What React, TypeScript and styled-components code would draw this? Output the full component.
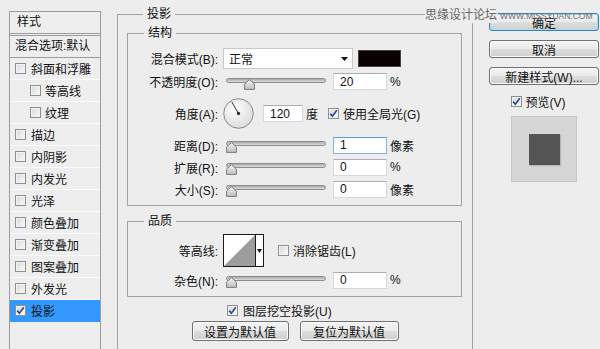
import React from 'react';
import styled, {createGlobalStyle} from 'styled-components';

const GlobalStyle = createGlobalStyle`
  html, body {
    margin: 0;
    padding: 0;
    background: #ededed;
  }
  body {
    font-family: "Liberation Sans", "Noto Sans CJK SC", sans-serif;
    font-size: 12px;
    color: #111;
  }
`;

type StyleItem = {
    name: string
    indent?: boolean
    checked?: boolean
    active?: boolean
}

const styleItems: StyleItem[] = [
    {name: '斜面和浮雕'},
    {name: '等高线', indent: true},
    {name: '纹理', indent: true},
    {name: '描边'},
    {name: '内阴影'},
    {name: '内发光'},
    {name: '光泽'},
    {name: '颜色叠加'},
    {name: '渐变叠加'},
    {name: '图案叠加'},
    {name: '外发光'},
    {name: '投影', checked: true, active: true},
];

const CheckBox = ({checked}: { checked?: boolean }) => (
    <Box>
        {checked ? (
            <svg width="9" height="9" viewBox="0 0 9 9">
                <path d="M1.2 4.6 L3.4 7.2 L7.8 1.2" fill="none" stroke="#2c4c92" strokeWidth="1.7"/>
            </svg>
        ) : null}
    </Box>
);

const Slider = ({value}: { value: number }) => (
    <SliderBox>
        <SliderRail/>
        <SliderThumb style={{left: `${Math.round(value * 89)}px`}} width="11" height="11" viewBox="0 0 11 11">
            <defs>
                <linearGradient id="thumbFill" x1="0" y1="0" x2="0" y2="1">
                    <stop offset="0" stopColor="#f6f6f6"/>
                    <stop offset="1" stopColor="#bdbdbd"/>
                </linearGradient>
            </defs>
            <path d="M5.5 0.6 L10.4 5 L10.4 10.4 L0.6 10.4 L0.6 5 Z" fill="url(#thumbFill)" stroke="#7a7a7a"/>
        </SliderThumb>
    </SliderBox>
);

const AngleDial = () => (
    <Dial width="31" height="31" viewBox="0 0 31 31">
        <defs>
            <radialGradient id="dialFill" cx="0.4" cy="0.35" r="0.7">
                <stop offset="0" stopColor="#ffffff"/>
                <stop offset="1" stopColor="#d9d9d9"/>
            </radialGradient>
        </defs>
        <circle cx="15.5" cy="15.5" r="14.8" fill="url(#dialFill)" stroke="#8a8a8a"/>
        <line x1="15.5" y1="15.5" x2="8.8" y2="3.9" stroke="#333" strokeWidth="1"/>
        <circle cx="15.5" cy="15.5" r="1.7" fill="#333"/>
    </Dial>
);

const DropArrow = ({w = 7}: { w?: number }) => (
    <svg width={w} height="4" viewBox={`0 0 ${w} 4`}>
        <path d={`M0 0 L${w} 0 L${w / 2} 4 Z`} fill="#111"/>
    </svg>
);

const App = () => {
    return (
        <Dialog>
            <GlobalStyle/>
            <StylesPanel>
                <PanelHeader>样式</PanelHeader>
                <BlendRow>混合选项:默认</BlendRow>
                {styleItems.map(item => (
                    <StyleRow key={item.name} $indent={item.indent} $active={item.active}>
                        <CheckBox checked={item.checked}/>
                        <span>{item.name}</span>
                    </StyleRow>
                ))}
            </StylesPanel>

            <MainGroup>
                <GroupTitle>投影</GroupTitle>
                <SubGroup $padTop={7} $padBottom={5}>
                    <GroupTitle>结构</GroupTitle>
                    <FieldRow $h={23}>
                        <FieldLabel>混合模式(B):</FieldLabel>
                        <SelectBox>
                            <span>正常</span>
                            <DropArrow/>
                        </SelectBox>
                        <Swatch/>
                    </FieldRow>
                    <FieldRow $h={23}>
                        <FieldLabel>不透明度(O):</FieldLabel>
                        <Slider value={0.2}/>
                        <NumberInput readOnly value="20"/>
                        <Unit>%</Unit>
                    </FieldRow>
                    <FieldRow $h={41}>
                        <FieldLabel>角度(A):</FieldLabel>
                        <AngleDial/>
                        <NumberInput readOnly value="120" $w={40} $gap={9}/>
                        <Unit>度</Unit>
                        <CheckLabel $gap={10}>
                            <CheckBox checked/>
                            <span>使用全局光(G)</span>
                        </CheckLabel>
                    </FieldRow>
                    <FieldRow $h={22}>
                        <FieldLabel>距离(D):</FieldLabel>
                        <Slider value={0}/>
                        <NumberInput readOnly value="1" $focused/>
                        <Unit>像素</Unit>
                    </FieldRow>
                    <FieldRow $h={22}>
                        <FieldLabel>扩展(R):</FieldLabel>
                        <Slider value={0}/>
                        <NumberInput readOnly value="0"/>
                        <Unit>%</Unit>
                    </FieldRow>
                    <FieldRow $h={22}>
                        <FieldLabel>大小(S):</FieldLabel>
                        <Slider value={0}/>
                        <NumberInput readOnly value="0"/>
                        <Unit>像素</Unit>
                    </FieldRow>
                </SubGroup>

                <SubGroup $padTop={4} $padBottom={5} $gapTop={8}>
                    <GroupTitle>品质</GroupTitle>
                    <FieldRow $h={37}>
                        <FieldLabel>等高线:</FieldLabel>
                        <ContourPicker>
                            <ContourCurve width="31" height="31" viewBox="0 0 31 31" preserveAspectRatio="none">
                                <path d="M0 31 L31 0 L31 31 Z" fill="#9d9d9d"/>
                            </ContourCurve>
                            <ContourArrow>
                                <DropArrow w={5}/>
                            </ContourArrow>
                        </ContourPicker>
                        <CheckLabel $gap={14}>
                            <CheckBox/>
                            <span>消除锯齿(L)</span>
                        </CheckLabel>
                    </FieldRow>
                    <FieldRow $h={22}>
                        <FieldLabel>杂色(N):</FieldLabel>
                        <Slider value={0}/>
                        <NumberInput readOnly value="0"/>
                        <Unit>%</Unit>
                    </FieldRow>
                </SubGroup>

                <KnockoutRow>
                    <CheckBox checked/>
                    <span>图层挖空投影(U)</span>
                </KnockoutRow>
                <DefaultsRow>
                    <PushButton $w={97} $h={20}>设置为默认值</PushButton>
                    <PushButton $w={99} $h={20}>复位为默认值</PushButton>
                </DefaultsRow>
            </MainGroup>

            <SideColumn>
                <PushButton $w={110} $h={18} $primary>确定</PushButton>
                <PushButton $w={110} $h={18}>取消</PushButton>
                <PushButton $w={110} $h={18}>新建样式(W)...</PushButton>
                <PreviewToggle>
                    <CheckBox checked/>
                    <span>预览(V)</span>
                </PreviewToggle>
                <PreviewBox>
                    <PreviewSquare/>
                </PreviewBox>
            </SideColumn>

            <Watermark>
                <WatermarkName>思缘设计论坛</WatermarkName>
                <WatermarkUrl>WWW.MISSYUAN.COM</WatermarkUrl>
            </Watermark>
        </Dialog>
    );
};

const Dialog = styled.div`
  position: relative;
  width: 600px;
  height: 349px;
  overflow: hidden;
  display: flex;
  align-items: flex-start;
  background: #ededed;
`

const StylesPanel = styled.div`
  flex-shrink: 0;
  margin: 11px 0 0 9px;
  width: 90px;
  height: 345px;
  border: 1px solid #9b9b9b;
  background: #eeeeee;
`

const PanelHeader = styled.div`
  height: 21px;
  line-height: 21px;
  padding-left: 7px;
  border-bottom: 3px double #9b9b9b;
`

const BlendRow = styled.div`
  height: 21px;
  line-height: 21px;
  padding-left: 5px;
  white-space: nowrap;
  overflow: hidden;
  border-bottom: 1px solid #9b9b9b;
`

const StyleRow = styled.div<{ $indent?: boolean; $active?: boolean }>`
  display: flex;
  align-items: center;
  gap: ${p => p.$indent ? '4px' : '5px'};
  height: 21px;
  padding-left: ${p => p.$indent ? '20px' : '5px'};
  border-bottom: 1px solid ${p => p.$active ? '#3399ff' : '#fbfbfb'};
  background: ${p => p.$active ? '#3399ff' : 'transparent'};
  white-space: nowrap;
`

const Box = styled.span`
  display: inline-flex;
  align-items: center;
  justify-content: center;
  flex-shrink: 0;
  box-sizing: border-box;
  width: 11px;
  height: 11px;
  border: 1px solid #8e8f8f;
  background: linear-gradient(135deg, #d6d6d6, #fbfbfb);
  box-shadow: inset 0 0 0 1px #f3f3f3;
`

const MainGroup = styled.fieldset`
  flex-shrink: 0;
  box-sizing: border-box;
  min-width: 0;
  width: 356px;
  height: 360px;
  margin: 7px 0 0 16px;
  padding: 5px 0 0 9px;
  border: 1px solid #a3a3a3;
`

const GroupTitle = styled.legend`
  margin-left: 16px;
  padding: 0 4px;
  line-height: 14px;
  font-size: 12px;
`

const SubGroup = styled.fieldset<{ $padTop: number; $padBottom: number; $gapTop?: number }>`
  box-sizing: border-box;
  min-width: 0;
  width: 335px;
  margin: ${p => p.$gapTop ?? 0}px 0 0 0;
  padding: ${p => p.$padTop}px 0 ${p => p.$padBottom}px 0;
  border: 1px solid #a3a3a3;
`

const FieldRow = styled.div<{ $h: number }>`
  display: flex;
  align-items: center;
  height: ${p => p.$h}px;
  white-space: nowrap;
`

const FieldLabel = styled.span`
  flex-shrink: 0;
  width: 90px;
  text-align: right;
`

const SelectBox = styled.div`
  display: flex;
  align-items: center;
  justify-content: space-between;
  box-sizing: border-box;
  width: 130px;
  height: 21px;
  margin-left: 5px;
  padding: 0 4px 0 5px;
  background: #fff;
  border: 1px solid #c9c9c9;
`

const Swatch = styled.div`
  box-sizing: border-box;
  width: 43px;
  height: 17px;
  margin-left: 5px;
  background: #0b0000;
  border: 1px solid #444;
`

const SliderBox = styled.div`
  position: relative;
  flex-shrink: 0;
  width: 100px;
  height: 14px;
  margin-left: 8px;
`

const SliderRail = styled.div`
  box-sizing: border-box;
  margin-top: 3px;
  height: 5px;
  border-radius: 3px;
  border: 1px solid #8c8c8c;
  background: linear-gradient(#a9a9a9, #dcdcdc);
`

const SliderThumb = styled.svg`
  position: absolute;
  top: 4px;
`

const NumberInput = styled.input<{ $w?: number; $gap?: number; $focused?: boolean }>`
  box-sizing: border-box;
  width: ${p => p.$w ?? 54}px;
  height: 17px;
  margin: 0 0 0 ${p => p.$gap ?? 7}px;
  padding: 0 0 0 6px;
  font: inherit;
  font-size: 12px;
  color: #111;
  background: #fff;
  outline: none;
  border: 1px solid ${p => p.$focused ? '#7eb4ea' : '#d5d8dd'};
  border-top-color: ${p => p.$focused ? '#569de5' : '#abadb3'};
`

const Unit = styled.span`
  margin-left: 3px;
`

const CheckLabel = styled.label<{ $gap: number }>`
  display: flex;
  align-items: center;
  gap: 4px;
  margin-left: ${p => p.$gap}px;
`

const Dial = styled.svg`
  flex-shrink: 0;
  margin-left: 5px;
`

const ContourPicker = styled.div`
  display: flex;
  box-sizing: border-box;
  width: 41px;
  height: 33px;
  margin-left: 5px;
  border: 1px solid #1a1a1a;
  background: #fff;
`

const ContourCurve = styled.svg`
  display: block;
`

const ContourArrow = styled.div`
  display: flex;
  align-items: center;
  justify-content: center;
  flex: 1;
  border-left: 1px solid #1a1a1a;
`

const KnockoutRow = styled.div`
  display: flex;
  align-items: center;
  gap: 5px;
  height: 20px;
  margin-top: 3px;
  padding-left: 100px;
`

const DefaultsRow = styled.div`
  display: flex;
  justify-content: center;
  gap: 11px;
  margin-top: 1px;
  padding-right: 9px;
`

const PushButton = styled.button<{ $w: number; $h: number; $primary?: boolean }>`
  box-sizing: border-box;
  width: ${p => p.$w}px;
  height: ${p => p.$h}px;
  padding: 0;
  font: inherit;
  font-size: 12px;
  color: #111;
  border-radius: 3px;
  border: 1px solid ${p => p.$primary ? '#3c7fb1' : '#707070'};
  background: linear-gradient(#f3f3f3 0%, #ebebeb 50%, #dddddd 51%, #cfcfcf 100%);
  box-shadow: ${p => p.$primary ? 'inset 0 0 0 1px #9fe0fb' : 'inset 0 0 0 1px #fafafa'};
`

const SideColumn = styled.div`
  flex-shrink: 0;
  display: flex;
  flex-direction: column;
  align-items: center;
  gap: 9px;
  width: 110px;
  margin: 13px 0 0 16px;
`

const PreviewToggle = styled.label`
  display: flex;
  align-items: center;
  gap: 4px;
  height: 20px;
  margin: -3px 0 0 -12px;
`

const PreviewBox = styled.div`
  display: flex;
  align-items: center;
  justify-content: center;
  box-sizing: border-box;
  width: 66px;
  height: 66px;
  margin-top: -4px;
  background: #d6d6d6;
  border: 1px solid #c6c6c6;
`

const PreviewSquare = styled.div`
  width: 31px;
  height: 31px;
  background: #555555;
  box-shadow: 1px 1px 1px rgba(0, 0, 0, 0.15);
`

const Watermark = styled.div`
  position: absolute;
  top: 7px;
  left: 425px;
  width: 172px;
  display: flex;
  align-items: center;
  white-space: nowrap;
`

const WatermarkName = styled.span`
  font-size: 12px;
  line-height: 16px;
  color: #666;
  background: #ededed;
  padding-right: 1px;
`

const WatermarkUrl = styled.span`
  margin: 2px 0 0 2px;
  font-family: "Liberation Sans", sans-serif;
  font-size: 8.5px;
  color: #6f6f6f;
`

export default App;
